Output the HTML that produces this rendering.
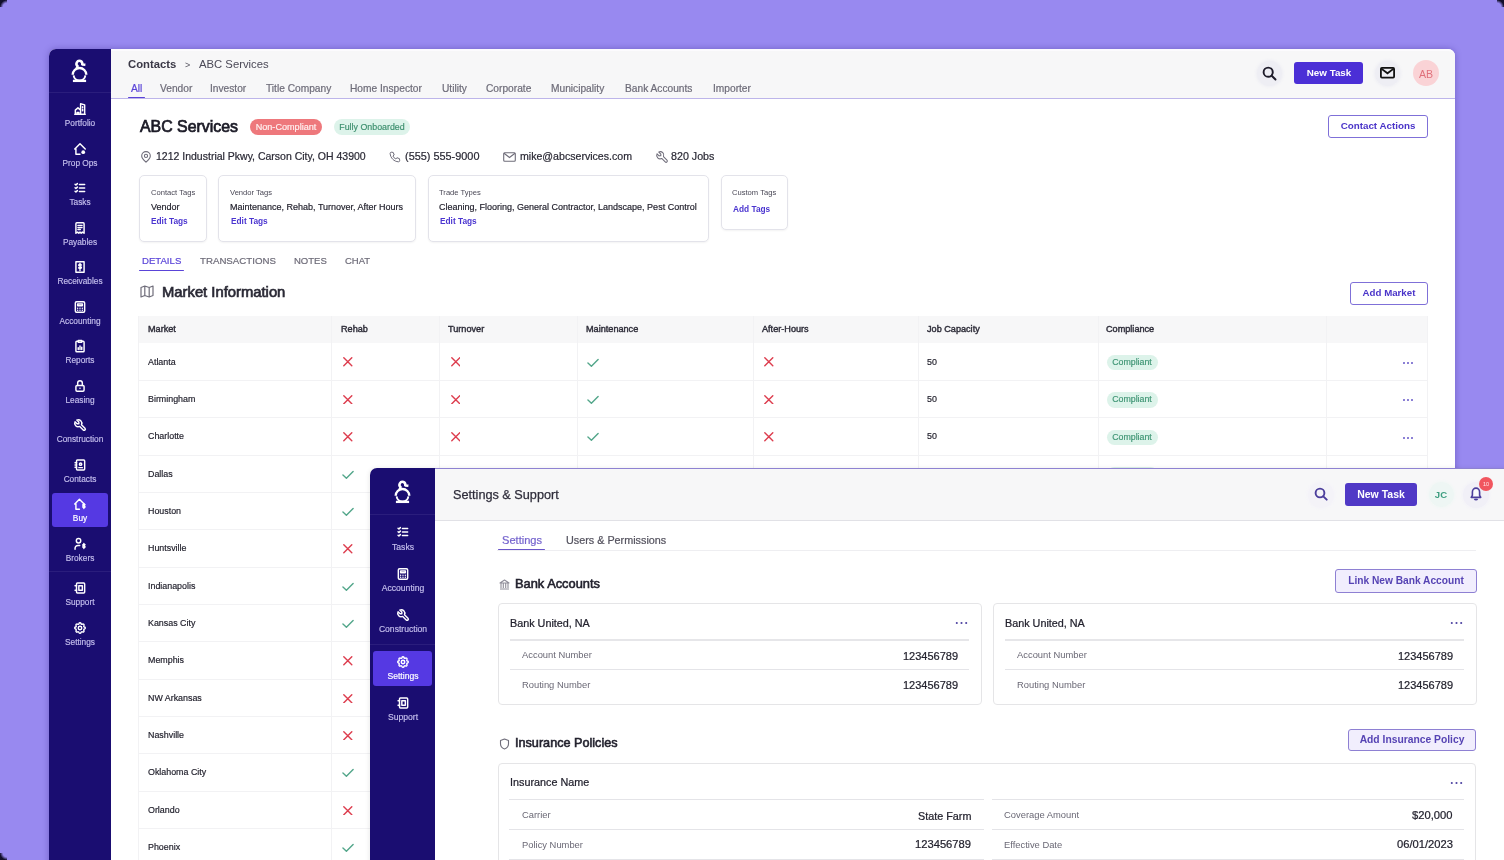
<!DOCTYPE html>
<html><head><meta charset="utf-8">
<style>
*{box-sizing:border-box;margin:0;padding:0}
html,body{width:1504px;height:860px;overflow:hidden}
body{background:#9889F0;font-family:"Liberation Sans",sans-serif;position:relative;color:#1f1d2e}
.abs{position:absolute}
.t{position:absolute;white-space:nowrap;line-height:1;will-change:transform}
</style></head><body>
<div class="abs" style="left:0;top:0;width:7px;height:7px;background:radial-gradient(circle at 100% 100%, rgba(10,8,32,0) 4px, rgba(10,8,32,0.95) 7px)"></div><div class="abs" style="left:1497px;top:0;width:7px;height:7px;background:radial-gradient(circle at 0% 100%, rgba(10,8,32,0) 4px, rgba(10,8,32,0.95) 7px)"></div><div class="abs" style="left:0;top:853px;width:7px;height:7px;background:radial-gradient(circle at 100% 0%, rgba(10,8,32,0) 4px, rgba(10,8,32,0.95) 7px)"></div><div class="abs" style="left:49.00px;top:48.80px;width:1406.30px;height:851.20px;background:#fff;border-radius:7px 7px 0 0;box-shadow:0 0 6px rgba(40,20,120,0.35)"></div><div class="abs" style="left:49.00px;top:48.80px;width:62.00px;height:851.20px;background:#1A0D71;border-radius:7px 0 0 0"></div><div class="abs" style="left:111.00px;top:48.80px;width:1344.30px;height:50.20px;background:#F7F7F8;border-radius:0 7px 0 0;border-top:2px solid #FCFBFE;border-bottom:1px solid #BDB5EA"></div><svg class="abs" style="left:67.15px;top:56.00px;" width="25.0" height="29.0" viewBox="0 0 25 29" fill="none"><g stroke="#fff" stroke-linecap="butt" fill="none"><path d="M9.6 12.6 L10.6 10.0 A2.9 2.9 0 1 1 15.2 8.4 L18.4 8.7" stroke-width="2.5" stroke-linejoin="round"/><path d="M5.7 18.8 A6.8 6.8 0 1 1 19.3 18.8" stroke-width="2.4"/><path d="M6.6 19.3 A5.95 5.95 0 0 0 18.4 19.3" stroke-width="1.9"/><path d="M5.9 24.9 H19.1" stroke-width="2.3"/></g></svg><div class="abs" style="left:49.00px;top:92.00px;width:62.00px;height:1.00px;background:#2A1D7C"></div><div class="abs" style="left:51.50px;top:493.00px;width:56.00px;height:33.50px;background:#5539E3;border-radius:3px"></div><div class="abs" style="left:49.00px;top:571.00px;width:62.00px;height:1.00px;background:#2A1D7C"></div><svg class="abs" style="left:72.50px;top:102.00px;" width="14" height="14" viewBox="0 0 24 24" fill="none"><path stroke="#fff" stroke-width="2.5" stroke-linecap="round" stroke-linejoin="round" fill="none" d="M3 21h18M4 21v-7l4.5-4 4.5 4v7M13 21V3l7 2v16M16.5 8v2M16.5 13v2M7 21v-3h3v3"/></svg><div class="t" style="left:-120.20px;width:400px;text-align:center;top:119.22px;font-size:8.3px;-webkit-text-stroke:0.17px currentColor;color:#C3BDEC;">Portfolio</div><svg class="abs" style="left:72.50px;top:141.60px;" width="14" height="14" viewBox="0 0 24 24" fill="none"><path stroke="#fff" stroke-width="2.5" stroke-linecap="round" stroke-linejoin="round" fill="none" d="M3 12l9-9 9 9M5 10v11h7"/><circle cx="17.5" cy="17.5" r="3.2" fill="#fff"/></svg><div class="t" style="left:-120.20px;width:400px;text-align:center;top:158.82px;font-size:8.3px;-webkit-text-stroke:0.17px currentColor;color:#C3BDEC;">Prop Ops</div><svg class="abs" style="left:72.50px;top:181.10px;" width="14" height="14" viewBox="0 0 24 24" fill="none"><path stroke="#fff" stroke-width="2.5" stroke-linecap="round" stroke-linejoin="round" fill="none" d="M3.5 5.5l1.5 1.5 2.5-2.5M3.5 11.5l1.5 1.5 2.5-2.5M3.5 17.5l1.5 1.5 2.5-2.5M11 6h9M11 12h9M11 18h9"/></svg><div class="t" style="left:-120.20px;width:400px;text-align:center;top:198.32px;font-size:8.3px;-webkit-text-stroke:0.17px currentColor;color:#C3BDEC;">Tasks</div><svg class="abs" style="left:72.50px;top:220.60px;" width="14" height="14" viewBox="0 0 24 24" fill="none"><path stroke="#fff" stroke-width="2.5" stroke-linecap="round" stroke-linejoin="round" fill="none" d="M5 21V4.5A1.5 1.5 0 016.5 3h11A1.5 1.5 0 0119 4.5V21l-3-2-2 2-2-2-2 2-2-2-3 2zM8.5 7.5h7M8.5 11h7M8.5 14.5h4"/></svg><div class="t" style="left:-120.20px;width:400px;text-align:center;top:237.82px;font-size:8.3px;-webkit-text-stroke:0.17px currentColor;color:#C3BDEC;">Payables</div><svg class="abs" style="left:72.50px;top:260.10px;" width="14" height="14" viewBox="0 0 24 24" fill="none"><path stroke="#fff" stroke-width="2.5" stroke-linecap="round" stroke-linejoin="round" fill="none" d="M5 3h14v18H5zM14.3 8.6c-.5-.8-1.3-1.2-2.3-1.2-1.3 0-2.2.7-2.2 1.7 0 2.4 4.6 1.3 4.6 3.7 0 1-.9 1.7-2.3 1.7-1 0-1.9-.5-2.4-1.2M12 6v12"/></svg><div class="t" style="left:-120.20px;width:400px;text-align:center;top:277.32px;font-size:8.3px;-webkit-text-stroke:0.17px currentColor;color:#C3BDEC;">Receivables</div><svg class="abs" style="left:72.50px;top:299.60px;" width="14" height="14" viewBox="0 0 24 24" fill="none"><rect x="4" y="3" width="16" height="18" rx="2" stroke="#fff" stroke-width="2.5" stroke-linecap="round" stroke-linejoin="round" fill="none"/><path stroke="#fff" stroke-width="2.5" stroke-linecap="round" stroke-linejoin="round" fill="none" d="M8 7h8v3H8zM8 14v.01M12 14v.01M16 14v.01M8 17.5v.01M12 17.5v.01M16 17.5v.01"/></svg><div class="t" style="left:-120.20px;width:400px;text-align:center;top:316.82px;font-size:8.3px;-webkit-text-stroke:0.17px currentColor;color:#C3BDEC;">Accounting</div><svg class="abs" style="left:72.50px;top:339.10px;" width="14" height="14" viewBox="0 0 24 24" fill="none"><path stroke="#fff" stroke-width="2.5" stroke-linecap="round" stroke-linejoin="round" fill="none" d="M9 4H6.5A1.5 1.5 0 005 5.5v15A1.5 1.5 0 006.5 22h11a1.5 1.5 0 001.5-1.5v-15A1.5 1.5 0 0017.5 4H15M9 2.5h6v3H9zM9 18v-3M12 18v-6M15 18v-4"/></svg><div class="t" style="left:-120.20px;width:400px;text-align:center;top:356.32px;font-size:8.3px;-webkit-text-stroke:0.17px currentColor;color:#C3BDEC;">Reports</div><svg class="abs" style="left:72.50px;top:378.60px;" width="14" height="14" viewBox="0 0 24 24" fill="none"><rect x="5" y="11" width="14" height="10" rx="2" stroke="#fff" stroke-width="2.5" stroke-linecap="round" stroke-linejoin="round" fill="none"/><circle cx="12" cy="16" r="1.3" fill="#fff"/><path stroke="#fff" stroke-width="2.5" stroke-linecap="round" stroke-linejoin="round" fill="none" d="M8 11V7a4 4 0 118 0v4"/></svg><div class="t" style="left:-120.20px;width:400px;text-align:center;top:395.82px;font-size:8.3px;-webkit-text-stroke:0.17px currentColor;color:#C3BDEC;">Leasing</div><svg class="abs" style="left:72.50px;top:418.10px;" width="14" height="14" viewBox="0 0 24 24" fill="none"><path stroke="#fff" stroke-width="2.5" stroke-linecap="round" stroke-linejoin="round" fill="none" d="M7 10h3V7L6.5 3.5a6 6 0 018 8l6 6a2 2 0 01-3 3l-6-6a6 6 0 01-8-8L7 10"/></svg><div class="t" style="left:-120.20px;width:400px;text-align:center;top:435.32px;font-size:8.3px;-webkit-text-stroke:0.17px currentColor;color:#C3BDEC;">Construction</div><svg class="abs" style="left:72.50px;top:457.60px;" width="14" height="14" viewBox="0 0 24 24" fill="none"><path stroke="#fff" stroke-width="2.5" stroke-linecap="round" stroke-linejoin="round" fill="none" d="M20 5v14a1.5 1.5 0 01-1.5 1.5h-11A1.5 1.5 0 016 19V5a1.5 1.5 0 011.5-1.5h11A1.5 1.5 0 0120 5zM10 16.5h6M3.5 8h3M3.5 12h3M3.5 16h3"/><circle cx="13" cy="10.5" r="2" stroke="#fff" stroke-width="2.5" stroke-linecap="round" stroke-linejoin="round" fill="none"/></svg><div class="t" style="left:-120.20px;width:400px;text-align:center;top:474.82px;font-size:8.3px;-webkit-text-stroke:0.17px currentColor;color:#C3BDEC;">Contacts</div><svg class="abs" style="left:72.50px;top:497.10px;" width="14" height="14" viewBox="0 0 24 24" fill="none"><path stroke="#fff" stroke-width="2.5" stroke-linecap="round" stroke-linejoin="round" fill="none" d="M3 12l8-8 8 8M5 10v11h6"/><path stroke="#fff" stroke-width="2.5" stroke-linecap="round" stroke-linejoin="round" fill="none" d="M20.5 13.2c-.4-.7-1.1-1-1.9-1-1.1 0-1.8.6-1.8 1.4 0 1.9 3.8 1 3.8 3 0 .8-.8 1.4-1.9 1.4-.8 0-1.6-.4-2-1M18.6 11v8.6"/></svg><div class="t" style="left:-120.20px;width:400px;text-align:center;top:514.32px;font-size:8.3px;-webkit-text-stroke:0.17px currentColor;color:#fff;">Buy</div><svg class="abs" style="left:72.50px;top:536.60px;" width="14" height="14" viewBox="0 0 24 24" fill="none"><circle cx="9.5" cy="6.5" r="3.8" stroke="#fff" stroke-width="2.5" stroke-linecap="round" stroke-linejoin="round" fill="none"/><path stroke="#fff" stroke-width="2.5" stroke-linecap="round" stroke-linejoin="round" fill="none" d="M3.5 21v-1.5a5 5 0 015-5h3"/><path stroke="#fff" stroke-width="2.5" stroke-linecap="round" stroke-linejoin="round" fill="none" d="M20.5 13.2c-.4-.7-1.1-1-1.9-1-1.1 0-1.8.6-1.8 1.4 0 1.9 3.8 1 3.8 3 0 .8-.8 1.4-1.9 1.4-.8 0-1.6-.4-2-1M18.6 11v8.6"/></svg><div class="t" style="left:-120.20px;width:400px;text-align:center;top:553.82px;font-size:8.3px;-webkit-text-stroke:0.17px currentColor;color:#C3BDEC;">Brokers</div><svg class="abs" style="left:72.50px;top:581.00px;" width="14" height="14" viewBox="0 0 24 24" fill="none"><path stroke="#fff" stroke-width="2.5" stroke-linecap="round" stroke-linejoin="round" fill="none" d="M20 5v14a1.5 1.5 0 01-1.5 1.5h-11A1.5 1.5 0 016 19V5a1.5 1.5 0 011.5-1.5h11A1.5 1.5 0 0120 5zM3.5 8h3M3.5 16h3M10 8h6v8h-6z"/></svg><div class="t" style="left:-120.20px;width:400px;text-align:center;top:598.22px;font-size:8.3px;-webkit-text-stroke:0.17px currentColor;color:#C3BDEC;">Support</div><svg class="abs" style="left:72.50px;top:620.50px;" width="14" height="14" viewBox="0 0 24 24" fill="none"><path stroke="#fff" stroke-width="2.5" stroke-linecap="round" stroke-linejoin="round" fill="none" d="M10.3 4.3c.4-1.8 2.9-1.8 3.4 0a1.7 1.7 0 002.6 1.1c1.5-.9 3.3.8 2.4 2.4a1.7 1.7 0 001 2.6c1.8.4 1.8 2.9 0 3.4a1.7 1.7 0 00-1 2.6c.9 1.5-.8 3.3-2.4 2.4a1.7 1.7 0 00-2.6 1c-.4 1.8-2.9 1.8-3.4 0a1.7 1.7 0 00-2.6-1c-1.5.9-3.3-.8-2.4-2.4a1.7 1.7 0 00-1-2.6c-1.8-.4-1.8-2.9 0-3.4a1.7 1.7 0 001-2.6c-.9-1.5.8-3.3 2.4-2.4 1 .6 2.3.1 2.6-1.1z"/><circle cx="12" cy="12" r="3" stroke="#fff" stroke-width="2.5" stroke-linecap="round" stroke-linejoin="round" fill="none"/></svg><div class="t" style="left:-120.20px;width:400px;text-align:center;top:637.72px;font-size:8.3px;-webkit-text-stroke:0.17px currentColor;color:#C3BDEC;">Settings</div><div class="t" style="left:128.00px;top:58.97px;font-size:11.3px;font-weight:bold;color:#3a3846;">Contacts</div><div class="t" style="left:184.50px;top:61.14px;font-size:9px;color:#55535f;">&gt;</div><div class="t" style="left:198.50px;top:58.97px;font-size:11.3px;color:#4b4957;">ABC Services</div><div class="t" style="left:131.00px;top:83.90px;font-size:10.2px;-webkit-text-stroke:0.20px currentColor;color:#5A44D8;">All</div><div class="t" style="left:160.00px;top:83.90px;font-size:10.2px;-webkit-text-stroke:0.20px currentColor;color:#6d6b78;">Vendor</div><div class="t" style="left:210.00px;top:83.90px;font-size:10.2px;-webkit-text-stroke:0.20px currentColor;color:#6d6b78;">Investor</div><div class="t" style="left:265.70px;top:83.90px;font-size:10.2px;-webkit-text-stroke:0.20px currentColor;color:#6d6b78;">Title Company</div><div class="t" style="left:350.40px;top:83.90px;font-size:10.2px;-webkit-text-stroke:0.20px currentColor;color:#6d6b78;">Home Inspector</div><div class="t" style="left:442.00px;top:83.90px;font-size:10.2px;-webkit-text-stroke:0.20px currentColor;color:#6d6b78;">Utility</div><div class="t" style="left:486.40px;top:83.90px;font-size:10.2px;-webkit-text-stroke:0.20px currentColor;color:#6d6b78;">Corporate</div><div class="t" style="left:550.60px;top:83.90px;font-size:10.2px;-webkit-text-stroke:0.20px currentColor;color:#6d6b78;">Municipality</div><div class="t" style="left:625.20px;top:83.90px;font-size:10.2px;-webkit-text-stroke:0.20px currentColor;color:#6d6b78;">Bank Accounts</div><div class="t" style="left:712.90px;top:83.90px;font-size:10.2px;-webkit-text-stroke:0.20px currentColor;color:#6d6b78;">Importer</div><div class="abs" style="left:128.00px;top:96.60px;width:17.00px;height:1.90px;background:#5A44D8;border-radius:1px"></div><div class="abs" style="left:1257.00px;top:60.50px;width:25.00px;height:25.00px;background:#EEEEF4;border-radius:50%;box-shadow:0 0 3px 1px #EEEEF4"></div><svg class="abs" style="left:1262.00px;top:66.00px;" width="15" height="15" viewBox="0 0 15 15" fill="none"><circle cx="6.2" cy="6.2" r="4.6" stroke="#1d1b29" stroke-width="1.9"/><path d="M9.7 9.7l3.8 3.8" stroke="#1d1b29" stroke-width="2" stroke-linecap="round"/></svg><div class="abs" style="left:1294.00px;top:62.00px;width:69.00px;height:21.50px;background:#4B2FD6;border-radius:3px"></div><div class="t" style="left:1128.50px;width:400px;text-align:center;top:67.85px;font-size:9.8px;font-weight:bold;color:#fff;">New Task</div><div class="abs" style="left:1375.00px;top:60.50px;width:25.00px;height:25.00px;background:#EEEEF4;border-radius:50%;box-shadow:0 0 3px 1px #EEEEF4"></div><svg class="abs" style="left:1380.20px;top:67.30px;" width="15" height="11.5" viewBox="0 0 15 11.5" fill="none"><rect x="0.9" y="0.9" width="13.2" height="9.7" rx="1" stroke="#111" stroke-width="1.8"/><path d="M1.3 1.6L7.5 6.3l6.2-4.7" stroke="#111" stroke-width="1.8"/></svg><div class="abs" style="left:1412.50px;top:59.50px;width:26.50px;height:26.50px;background:#FAD3D6;border-radius:50%"></div><div class="t" style="left:1225.80px;width:400px;text-align:center;top:68.55px;font-size:10.6px;color:#E0707B;">AB</div><div class="t" style="left:139.60px;top:119.13px;font-size:15.9px;-webkit-text-stroke:0.72px currentColor;color:#1b1a26;">ABC Services</div><div class="abs" style="left:249.70px;top:118.60px;width:72.20px;height:16.40px;background:#EE787C;border-radius:9px"></div><div class="t" style="left:85.80px;width:400px;text-align:center;top:123.03px;font-size:9.1px;-webkit-text-stroke:0.18px currentColor;color:#FFF0F0;">Non-Compliant</div><div class="abs" style="left:334.00px;top:118.60px;width:76.00px;height:16.40px;background:#DDF3EA;border-radius:9px"></div><div class="t" style="left:172.30px;width:400px;text-align:center;top:123.06px;font-size:8.85px;-webkit-text-stroke:0.18px currentColor;color:#3D8F6E;">Fully Onboarded</div><div class="abs" style="left:1328.30px;top:115.20px;width:99.40px;height:22.60px;background:#fff;border:1px solid #7F70D8;border-radius:3px"></div><div class="t" style="left:1178.00px;width:400px;text-align:center;top:121.45px;font-size:9.8px;font-weight:bold;color:#4A34C9;">Contact Actions</div><svg class="abs" style="left:140.00px;top:151.00px;" width="12" height="12" viewBox="0 0 12 12" fill="none"><path d="M6 11.2c-2.6-2.4-4.3-4.3-4.3-6.3a4.3 4.3 0 018.6 0c0 2-1.7 3.9-4.3 6.3z" stroke="#6f6d7a" stroke-width="1.1"/><circle cx="6" cy="4.9" r="1.6" stroke="#6f6d7a" stroke-width="1.1"/></svg><div class="t" style="left:156.00px;top:151.27px;font-size:10.5px;-webkit-text-stroke:0.21px currentColor;color:#2a2935;">1212 Industrial Pkwy, Carson City, OH 43900</div><svg class="abs" style="left:389.00px;top:151.00px;" width="12" height="12" viewBox="0 0 12 12" fill="none"><path d="M2.2 1.2l2 .2 1 2.6-1.3 1c.6 1.4 1.6 2.4 3 3l1-1.3 2.6 1 .2 2c0 .6-.5 1.1-1.1 1.1C5 10.6 1.4 7 1.1 2.3c0-.6.5-1.1 1.1-1.1z" stroke="#6f6d7a" stroke-width="1"/></svg><div class="t" style="left:404.90px;top:151.22px;font-size:10.9px;-webkit-text-stroke:0.22px currentColor;color:#2a2935;">(555) 555-9000</div><svg class="abs" style="left:503.00px;top:151.50px;" width="13" height="10" viewBox="0 0 13 10" fill="none"><rect x=".7" y=".7" width="11.6" height="8.6" rx="1" stroke="#6f6d7a" stroke-width="1.1"/><path d="M1 1.2l5.5 4.3L12 1.2" stroke="#6f6d7a" stroke-width="1.1"/></svg><div class="t" style="left:519.60px;top:151.25px;font-size:10.6px;-webkit-text-stroke:0.21px currentColor;color:#2a2935;">mike@abcservices.com</div><svg class="abs" style="left:654.50px;top:150.00px;" width="14" height="14" viewBox="0 0 24 24" fill="none"><path stroke="#6f6d7a" stroke-width="1.8" stroke-linecap="round" stroke-linejoin="round" fill="none" d="M7 10h3V7L6.5 3.5a6 6 0 018 8l6 6a2 2 0 01-3 3l-6-6a6 6 0 01-8-8L7 10"/></svg><div class="t" style="left:671.40px;top:151.24px;font-size:10.7px;-webkit-text-stroke:0.21px currentColor;color:#2a2935;">820 Jobs</div><div class="abs" style="left:139.00px;top:175.00px;width:68.00px;height:67.00px;background:#fff;border:1px solid #E3E3EA;border-radius:5px;box-shadow:0 1px 2px rgba(0,0,0,0.05)"></div><div class="abs" style="left:218.40px;top:175.00px;width:197.30px;height:67.00px;background:#fff;border:1px solid #E3E3EA;border-radius:5px;box-shadow:0 1px 2px rgba(0,0,0,0.05)"></div><div class="abs" style="left:427.60px;top:175.00px;width:281.40px;height:67.00px;background:#fff;border:1px solid #E3E3EA;border-radius:5px;box-shadow:0 1px 2px rgba(0,0,0,0.05)"></div><div class="abs" style="left:720.90px;top:175.00px;width:67.10px;height:54.50px;background:#fff;border:1px solid #E3E3EA;border-radius:5px;box-shadow:0 1px 2px rgba(0,0,0,0.05)"></div><div class="t" style="left:151.00px;top:188.91px;font-size:7.6px;color:#4a4856;">Contact Tags</div><div class="t" style="left:151.00px;top:202.64px;font-size:9.0px;-webkit-text-stroke:0.18px currentColor;color:#23222e;">Vendor</div><div class="t" style="left:151.30px;top:217.32px;font-size:8.3px;font-weight:bold;color:#4B35D0;">Edit Tags</div><div class="t" style="left:230.30px;top:188.91px;font-size:7.6px;color:#4a4856;">Vendor Tags</div><div class="t" style="left:230.30px;top:202.64px;font-size:9.0px;-webkit-text-stroke:0.18px currentColor;color:#23222e;">Maintenance, Rehab, Turnover, After Hours</div><div class="t" style="left:230.60px;top:217.32px;font-size:8.3px;font-weight:bold;color:#4B35D0;">Edit Tags</div><div class="t" style="left:439.40px;top:188.91px;font-size:7.6px;color:#4a4856;">Trade Types</div><div class="t" style="left:439.40px;top:202.64px;font-size:9.0px;-webkit-text-stroke:0.18px currentColor;color:#23222e;">Cleaning, Flooring, General Contractor, Landscape, Pest Control</div><div class="t" style="left:439.70px;top:217.32px;font-size:8.3px;font-weight:bold;color:#4B35D0;">Edit Tags</div><div class="t" style="left:732.40px;top:188.91px;font-size:7.6px;color:#4a4856;">Custom Tags</div><div class="t" style="left:733.20px;top:205.02px;font-size:8.3px;font-weight:bold;color:#4B35D0;">Add Tags</div><div class="t" style="left:142.20px;top:256.47px;font-size:9.6px;-webkit-text-stroke:0.19px currentColor;color:#5A44D8;">DETAILS</div><div class="t" style="left:199.70px;top:256.46px;font-size:9.7px;-webkit-text-stroke:0.19px currentColor;color:#6d6b78;">TRANSACTIONS</div><div class="t" style="left:293.70px;top:256.48px;font-size:9.5px;-webkit-text-stroke:0.19px currentColor;color:#6d6b78;">NOTES</div><div class="t" style="left:344.50px;top:256.48px;font-size:9.5px;-webkit-text-stroke:0.19px currentColor;color:#6d6b78;">CHAT</div><div class="abs" style="left:138.60px;top:269.50px;width:45.60px;height:1.80px;background:#5A44D8;border-radius:1px"></div><svg class="abs" style="left:140.00px;top:284.50px;" width="14" height="13" viewBox="0 0 14 13" fill="none"><path d="M1 2.5l3.8-1.5 4.4 1.5L13 1v9.5l-3.8 1.5-4.4-1.5L1 12z M4.8 1v9.5 M9.2 2.5V12" stroke="#6f6d7a" stroke-width="1.2" stroke-linejoin="round"/></svg><div class="t" style="left:162.00px;top:284.96px;font-size:14.8px;-webkit-text-stroke:0.67px currentColor;color:#2a2935;">Market Information</div><div class="abs" style="left:1350.40px;top:282.20px;width:77.30px;height:22.60px;background:#fff;border:1px solid #7F70D8;border-radius:3px"></div><div class="t" style="left:1189.00px;width:400px;text-align:center;top:288.46px;font-size:9.7px;font-weight:bold;color:#4A34C9;">Add Market</div><div class="abs" style="left:139.00px;top:316.30px;width:1289.00px;height:27.20px;background:#F7F7F8"></div><div class="t" style="left:147.80px;top:324.92px;font-size:9.15px;-webkit-text-stroke:0.41px currentColor;color:#2e2d39;">Market</div><div class="t" style="left:340.60px;top:324.92px;font-size:9.15px;-webkit-text-stroke:0.41px currentColor;color:#2e2d39;">Rehab</div><div class="t" style="left:448.10px;top:324.92px;font-size:9.15px;-webkit-text-stroke:0.41px currentColor;color:#2e2d39;">Turnover</div><div class="t" style="left:585.70px;top:324.92px;font-size:9.15px;-webkit-text-stroke:0.41px currentColor;color:#2e2d39;">Maintenance</div><div class="t" style="left:761.50px;top:324.92px;font-size:9.15px;-webkit-text-stroke:0.41px currentColor;color:#2e2d39;">After-Hours</div><div class="t" style="left:926.80px;top:324.92px;font-size:9.15px;-webkit-text-stroke:0.41px currentColor;color:#2e2d39;">Job Capacity</div><div class="t" style="left:1106.30px;top:324.92px;font-size:9.15px;-webkit-text-stroke:0.41px currentColor;color:#2e2d39;">Compliance</div><div class="abs" style="left:331.30px;top:316.30px;width:1.00px;height:543.70px;background:#F2F2F4"></div><div class="abs" style="left:439.30px;top:316.30px;width:1.00px;height:543.70px;background:#F2F2F4"></div><div class="abs" style="left:576.90px;top:316.30px;width:1.00px;height:543.70px;background:#F2F2F4"></div><div class="abs" style="left:752.70px;top:316.30px;width:1.00px;height:543.70px;background:#F2F2F4"></div><div class="abs" style="left:918.00px;top:316.30px;width:1.00px;height:543.70px;background:#F2F2F4"></div><div class="abs" style="left:1097.50px;top:316.30px;width:1.00px;height:543.70px;background:#F2F2F4"></div><div class="abs" style="left:1326.20px;top:316.30px;width:1.00px;height:543.70px;background:#F2F2F4"></div><div class="abs" style="left:138.40px;top:316.30px;width:1.00px;height:543.70px;background:#F2F2F4"></div><div class="abs" style="left:1427.00px;top:316.30px;width:1.00px;height:543.70px;background:#F2F2F4"></div><div class="abs" style="left:139.00px;top:379.85px;width:1289.00px;height:1.00px;background:#F2F2F4"></div><div class="t" style="left:147.80px;top:357.55px;font-size:8.9px;-webkit-text-stroke:0.18px currentColor;color:#1e1d29;">Atlanta</div><svg class="abs" style="left:343.10px;top:357.40px;" width="9.6" height="9.6" viewBox="0 0 9.6 9.6" fill="none"><path d="M0.8 0.8L8.8 8.8M8.8 0.8L0.8 8.8" stroke="#DD3D4E" stroke-width="1.4" stroke-linecap="round"/></svg><svg class="abs" style="left:450.60px;top:357.40px;" width="9.6" height="9.6" viewBox="0 0 9.6 9.6" fill="none"><path d="M0.8 0.8L8.8 8.8M8.8 0.8L0.8 8.8" stroke="#DD3D4E" stroke-width="1.4" stroke-linecap="round"/></svg><svg class="abs" style="left:587.20px;top:357.50px;" width="12" height="10" viewBox="0 0 12 10" fill="none"><path d="M0.95 5L4.4 8.2L11.1 1.5" stroke="#52A68A" stroke-width="1.4" stroke-linecap="round" stroke-linejoin="round"/></svg><svg class="abs" style="left:764.00px;top:357.40px;" width="9.6" height="9.6" viewBox="0 0 9.6 9.6" fill="none"><path d="M0.8 0.8L8.8 8.8M8.8 0.8L0.8 8.8" stroke="#DD3D4E" stroke-width="1.4" stroke-linecap="round"/></svg><div class="t" style="left:926.80px;top:357.55px;font-size:8.9px;-webkit-text-stroke:0.18px currentColor;color:#23222e;">50</div><div class="abs" style="left:1106.50px;top:355.00px;width:51.30px;height:15.30px;background:#DDF3EA;border-radius:8px"></div><div class="t" style="left:932.10px;width:400px;text-align:center;top:358.07px;font-size:8.8px;-webkit-text-stroke:0.18px currentColor;color:#3F9574;">Compliant</div><svg class="abs" style="left:1401.50px;top:361.00px;" width="12" height="4" viewBox="0 0 12 4" fill="none"><circle cx="2" cy="2" r="0.95" fill="#5B4BC4"/><circle cx="6" cy="2" r="0.95" fill="#5B4BC4"/><circle cx="10" cy="2" r="0.95" fill="#5B4BC4"/></svg><div class="abs" style="left:139.00px;top:417.20px;width:1289.00px;height:1.00px;background:#F2F2F4"></div><div class="t" style="left:147.80px;top:394.90px;font-size:8.9px;-webkit-text-stroke:0.18px currentColor;color:#1e1d29;">Birmingham</div><svg class="abs" style="left:343.10px;top:394.75px;" width="9.6" height="9.6" viewBox="0 0 9.6 9.6" fill="none"><path d="M0.8 0.8L8.8 8.8M8.8 0.8L0.8 8.8" stroke="#DD3D4E" stroke-width="1.4" stroke-linecap="round"/></svg><svg class="abs" style="left:450.60px;top:394.75px;" width="9.6" height="9.6" viewBox="0 0 9.6 9.6" fill="none"><path d="M0.8 0.8L8.8 8.8M8.8 0.8L0.8 8.8" stroke="#DD3D4E" stroke-width="1.4" stroke-linecap="round"/></svg><svg class="abs" style="left:587.20px;top:394.85px;" width="12" height="10" viewBox="0 0 12 10" fill="none"><path d="M0.95 5L4.4 8.2L11.1 1.5" stroke="#52A68A" stroke-width="1.4" stroke-linecap="round" stroke-linejoin="round"/></svg><svg class="abs" style="left:764.00px;top:394.75px;" width="9.6" height="9.6" viewBox="0 0 9.6 9.6" fill="none"><path d="M0.8 0.8L8.8 8.8M8.8 0.8L0.8 8.8" stroke="#DD3D4E" stroke-width="1.4" stroke-linecap="round"/></svg><div class="t" style="left:926.80px;top:394.90px;font-size:8.9px;-webkit-text-stroke:0.18px currentColor;color:#23222e;">50</div><div class="abs" style="left:1106.50px;top:392.35px;width:51.30px;height:15.30px;background:#DDF3EA;border-radius:8px"></div><div class="t" style="left:932.10px;width:400px;text-align:center;top:395.42px;font-size:8.8px;-webkit-text-stroke:0.18px currentColor;color:#3F9574;">Compliant</div><svg class="abs" style="left:1401.50px;top:398.35px;" width="12" height="4" viewBox="0 0 12 4" fill="none"><circle cx="2" cy="2" r="0.95" fill="#5B4BC4"/><circle cx="6" cy="2" r="0.95" fill="#5B4BC4"/><circle cx="10" cy="2" r="0.95" fill="#5B4BC4"/></svg><div class="abs" style="left:139.00px;top:454.55px;width:1289.00px;height:1.00px;background:#F2F2F4"></div><div class="t" style="left:147.80px;top:432.25px;font-size:8.9px;-webkit-text-stroke:0.18px currentColor;color:#1e1d29;">Charlotte</div><svg class="abs" style="left:343.10px;top:432.10px;" width="9.6" height="9.6" viewBox="0 0 9.6 9.6" fill="none"><path d="M0.8 0.8L8.8 8.8M8.8 0.8L0.8 8.8" stroke="#DD3D4E" stroke-width="1.4" stroke-linecap="round"/></svg><svg class="abs" style="left:450.60px;top:432.10px;" width="9.6" height="9.6" viewBox="0 0 9.6 9.6" fill="none"><path d="M0.8 0.8L8.8 8.8M8.8 0.8L0.8 8.8" stroke="#DD3D4E" stroke-width="1.4" stroke-linecap="round"/></svg><svg class="abs" style="left:587.20px;top:432.20px;" width="12" height="10" viewBox="0 0 12 10" fill="none"><path d="M0.95 5L4.4 8.2L11.1 1.5" stroke="#52A68A" stroke-width="1.4" stroke-linecap="round" stroke-linejoin="round"/></svg><svg class="abs" style="left:764.00px;top:432.10px;" width="9.6" height="9.6" viewBox="0 0 9.6 9.6" fill="none"><path d="M0.8 0.8L8.8 8.8M8.8 0.8L0.8 8.8" stroke="#DD3D4E" stroke-width="1.4" stroke-linecap="round"/></svg><div class="t" style="left:926.80px;top:432.25px;font-size:8.9px;-webkit-text-stroke:0.18px currentColor;color:#23222e;">50</div><div class="abs" style="left:1106.50px;top:429.70px;width:51.30px;height:15.30px;background:#DDF3EA;border-radius:8px"></div><div class="t" style="left:932.10px;width:400px;text-align:center;top:432.77px;font-size:8.8px;-webkit-text-stroke:0.18px currentColor;color:#3F9574;">Compliant</div><svg class="abs" style="left:1401.50px;top:435.70px;" width="12" height="4" viewBox="0 0 12 4" fill="none"><circle cx="2" cy="2" r="0.95" fill="#5B4BC4"/><circle cx="6" cy="2" r="0.95" fill="#5B4BC4"/><circle cx="10" cy="2" r="0.95" fill="#5B4BC4"/></svg><div class="abs" style="left:139.00px;top:491.90px;width:1289.00px;height:1.00px;background:#F2F2F4"></div><div class="t" style="left:147.80px;top:469.60px;font-size:8.9px;-webkit-text-stroke:0.18px currentColor;color:#1e1d29;">Dallas</div><svg class="abs" style="left:342.10px;top:469.55px;" width="12" height="10" viewBox="0 0 12 10" fill="none"><path d="M0.95 5L4.4 8.2L11.1 1.5" stroke="#52A68A" stroke-width="1.4" stroke-linecap="round" stroke-linejoin="round"/></svg><svg class="abs" style="left:450.60px;top:469.45px;" width="9.6" height="9.6" viewBox="0 0 9.6 9.6" fill="none"><path d="M0.8 0.8L8.8 8.8M8.8 0.8L0.8 8.8" stroke="#DD3D4E" stroke-width="1.4" stroke-linecap="round"/></svg><svg class="abs" style="left:587.20px;top:469.55px;" width="12" height="10" viewBox="0 0 12 10" fill="none"><path d="M0.95 5L4.4 8.2L11.1 1.5" stroke="#52A68A" stroke-width="1.4" stroke-linecap="round" stroke-linejoin="round"/></svg><svg class="abs" style="left:764.00px;top:469.45px;" width="9.6" height="9.6" viewBox="0 0 9.6 9.6" fill="none"><path d="M0.8 0.8L8.8 8.8M8.8 0.8L0.8 8.8" stroke="#DD3D4E" stroke-width="1.4" stroke-linecap="round"/></svg><div class="t" style="left:926.80px;top:469.60px;font-size:8.9px;-webkit-text-stroke:0.18px currentColor;color:#23222e;">50</div><div class="abs" style="left:1106.50px;top:467.05px;width:51.30px;height:15.30px;background:#DDF3EA;border-radius:8px"></div><div class="t" style="left:932.10px;width:400px;text-align:center;top:470.12px;font-size:8.8px;-webkit-text-stroke:0.18px currentColor;color:#3F9574;">Compliant</div><svg class="abs" style="left:1401.50px;top:473.05px;" width="12" height="4" viewBox="0 0 12 4" fill="none"><circle cx="2" cy="2" r="0.95" fill="#5B4BC4"/><circle cx="6" cy="2" r="0.95" fill="#5B4BC4"/><circle cx="10" cy="2" r="0.95" fill="#5B4BC4"/></svg><div class="abs" style="left:139.00px;top:529.25px;width:1289.00px;height:1.00px;background:#F2F2F4"></div><div class="t" style="left:147.80px;top:506.95px;font-size:8.9px;-webkit-text-stroke:0.18px currentColor;color:#1e1d29;">Houston</div><svg class="abs" style="left:342.10px;top:506.90px;" width="12" height="10" viewBox="0 0 12 10" fill="none"><path d="M0.95 5L4.4 8.2L11.1 1.5" stroke="#52A68A" stroke-width="1.4" stroke-linecap="round" stroke-linejoin="round"/></svg><div class="abs" style="left:139.00px;top:566.60px;width:1289.00px;height:1.00px;background:#F2F2F4"></div><div class="t" style="left:147.80px;top:544.30px;font-size:8.9px;-webkit-text-stroke:0.18px currentColor;color:#1e1d29;">Huntsville</div><svg class="abs" style="left:343.10px;top:544.15px;" width="9.6" height="9.6" viewBox="0 0 9.6 9.6" fill="none"><path d="M0.8 0.8L8.8 8.8M8.8 0.8L0.8 8.8" stroke="#DD3D4E" stroke-width="1.4" stroke-linecap="round"/></svg><div class="abs" style="left:139.00px;top:603.95px;width:1289.00px;height:1.00px;background:#F2F2F4"></div><div class="t" style="left:147.80px;top:581.65px;font-size:8.9px;-webkit-text-stroke:0.18px currentColor;color:#1e1d29;">Indianapolis</div><svg class="abs" style="left:342.10px;top:581.60px;" width="12" height="10" viewBox="0 0 12 10" fill="none"><path d="M0.95 5L4.4 8.2L11.1 1.5" stroke="#52A68A" stroke-width="1.4" stroke-linecap="round" stroke-linejoin="round"/></svg><div class="abs" style="left:139.00px;top:641.30px;width:1289.00px;height:1.00px;background:#F2F2F4"></div><div class="t" style="left:147.80px;top:619.00px;font-size:8.9px;-webkit-text-stroke:0.18px currentColor;color:#1e1d29;">Kansas City</div><svg class="abs" style="left:342.10px;top:618.95px;" width="12" height="10" viewBox="0 0 12 10" fill="none"><path d="M0.95 5L4.4 8.2L11.1 1.5" stroke="#52A68A" stroke-width="1.4" stroke-linecap="round" stroke-linejoin="round"/></svg><div class="abs" style="left:139.00px;top:678.65px;width:1289.00px;height:1.00px;background:#F2F2F4"></div><div class="t" style="left:147.80px;top:656.35px;font-size:8.9px;-webkit-text-stroke:0.18px currentColor;color:#1e1d29;">Memphis</div><svg class="abs" style="left:343.10px;top:656.20px;" width="9.6" height="9.6" viewBox="0 0 9.6 9.6" fill="none"><path d="M0.8 0.8L8.8 8.8M8.8 0.8L0.8 8.8" stroke="#DD3D4E" stroke-width="1.4" stroke-linecap="round"/></svg><div class="abs" style="left:139.00px;top:716.00px;width:1289.00px;height:1.00px;background:#F2F2F4"></div><div class="t" style="left:147.80px;top:693.70px;font-size:8.9px;-webkit-text-stroke:0.18px currentColor;color:#1e1d29;">NW Arkansas</div><svg class="abs" style="left:343.10px;top:693.55px;" width="9.6" height="9.6" viewBox="0 0 9.6 9.6" fill="none"><path d="M0.8 0.8L8.8 8.8M8.8 0.8L0.8 8.8" stroke="#DD3D4E" stroke-width="1.4" stroke-linecap="round"/></svg><div class="abs" style="left:139.00px;top:753.35px;width:1289.00px;height:1.00px;background:#F2F2F4"></div><div class="t" style="left:147.80px;top:731.05px;font-size:8.9px;-webkit-text-stroke:0.18px currentColor;color:#1e1d29;">Nashville</div><svg class="abs" style="left:343.10px;top:730.90px;" width="9.6" height="9.6" viewBox="0 0 9.6 9.6" fill="none"><path d="M0.8 0.8L8.8 8.8M8.8 0.8L0.8 8.8" stroke="#DD3D4E" stroke-width="1.4" stroke-linecap="round"/></svg><div class="abs" style="left:139.00px;top:790.70px;width:1289.00px;height:1.00px;background:#F2F2F4"></div><div class="t" style="left:147.80px;top:768.40px;font-size:8.9px;-webkit-text-stroke:0.18px currentColor;color:#1e1d29;">Oklahoma City</div><svg class="abs" style="left:342.10px;top:768.35px;" width="12" height="10" viewBox="0 0 12 10" fill="none"><path d="M0.95 5L4.4 8.2L11.1 1.5" stroke="#52A68A" stroke-width="1.4" stroke-linecap="round" stroke-linejoin="round"/></svg><div class="abs" style="left:139.00px;top:828.05px;width:1289.00px;height:1.00px;background:#F2F2F4"></div><div class="t" style="left:147.80px;top:805.75px;font-size:8.9px;-webkit-text-stroke:0.18px currentColor;color:#1e1d29;">Orlando</div><svg class="abs" style="left:343.10px;top:805.60px;" width="9.6" height="9.6" viewBox="0 0 9.6 9.6" fill="none"><path d="M0.8 0.8L8.8 8.8M8.8 0.8L0.8 8.8" stroke="#DD3D4E" stroke-width="1.4" stroke-linecap="round"/></svg><div class="abs" style="left:139.00px;top:865.40px;width:1289.00px;height:1.00px;background:#F2F2F4"></div><div class="t" style="left:147.80px;top:843.10px;font-size:8.9px;-webkit-text-stroke:0.18px currentColor;color:#1e1d29;">Phoenix</div><svg class="abs" style="left:342.10px;top:843.05px;" width="12" height="10" viewBox="0 0 12 10" fill="none"><path d="M0.95 5L4.4 8.2L11.1 1.5" stroke="#52A68A" stroke-width="1.4" stroke-linecap="round" stroke-linejoin="round"/></svg><div class="abs" style="left:369.80px;top:468.00px;width:1170.20px;height:432.00px;background:#fff;border-radius:7px 0 0 0;box-shadow:-1px 0 4px rgba(0,0,0,0.08)"></div><div class="abs" style="left:369.80px;top:468.00px;width:65.20px;height:432.00px;background:#1A0D71;border-radius:7px 0 0 0"></div><div class="abs" style="left:435.00px;top:468.00px;width:1069.00px;height:53.00px;background:#F7F7F8;border-top:1px solid #8E82D2;border-bottom:1px solid #E1E1E6"></div><svg class="abs" style="left:390.00px;top:477.00px;" width="25.0" height="29.0" viewBox="0 0 25 29" fill="none"><g stroke="#fff" stroke-linecap="butt" fill="none"><path d="M9.6 12.6 L10.6 10.0 A2.9 2.9 0 1 1 15.2 8.4 L18.4 8.7" stroke-width="2.5" stroke-linejoin="round"/><path d="M5.7 18.8 A6.8 6.8 0 1 1 19.3 18.8" stroke-width="2.4"/><path d="M6.6 19.3 A5.95 5.95 0 0 0 18.4 19.3" stroke-width="1.9"/><path d="M5.9 24.9 H19.1" stroke-width="2.3"/></g></svg><div class="abs" style="left:369.80px;top:514.00px;width:65.20px;height:1.00px;background:#2A1D7C"></div><div class="abs" style="left:369.80px;top:644.00px;width:65.20px;height:1.00px;background:#2A1D7C"></div><div class="abs" style="left:373.20px;top:651.00px;width:58.80px;height:35.00px;background:#5539E3;border-radius:3px"></div><svg class="abs" style="left:395.50px;top:525.30px;" width="14" height="14" viewBox="0 0 24 24" fill="none"><path stroke="#fff" stroke-width="2.5" stroke-linecap="round" stroke-linejoin="round" fill="none" d="M3.5 5.5l1.5 1.5 2.5-2.5M3.5 11.5l1.5 1.5 2.5-2.5M3.5 17.5l1.5 1.5 2.5-2.5M11 6h9M11 12h9M11 18h9"/></svg><div class="t" style="left:202.60px;width:400px;text-align:center;top:542.99px;font-size:8.6px;-webkit-text-stroke:0.17px currentColor;color:#C3BDEC;">Tasks</div><svg class="abs" style="left:395.50px;top:566.80px;" width="14" height="14" viewBox="0 0 24 24" fill="none"><rect x="4" y="3" width="16" height="18" rx="2" stroke="#fff" stroke-width="2.5" stroke-linecap="round" stroke-linejoin="round" fill="none"/><path stroke="#fff" stroke-width="2.5" stroke-linecap="round" stroke-linejoin="round" fill="none" d="M8 7h8v3H8zM8 14v.01M12 14v.01M16 14v.01M8 17.5v.01M12 17.5v.01M16 17.5v.01"/></svg><div class="t" style="left:202.60px;width:400px;text-align:center;top:583.99px;font-size:8.6px;-webkit-text-stroke:0.17px currentColor;color:#C3BDEC;">Accounting</div><svg class="abs" style="left:395.50px;top:607.80px;" width="14" height="14" viewBox="0 0 24 24" fill="none"><path stroke="#fff" stroke-width="2.5" stroke-linecap="round" stroke-linejoin="round" fill="none" d="M7 10h3V7L6.5 3.5a6 6 0 018 8l6 6a2 2 0 01-3 3l-6-6a6 6 0 01-8-8L7 10"/></svg><div class="t" style="left:202.60px;width:400px;text-align:center;top:624.69px;font-size:8.6px;-webkit-text-stroke:0.17px currentColor;color:#C3BDEC;">Construction</div><svg class="abs" style="left:395.50px;top:655.00px;" width="14" height="14" viewBox="0 0 24 24" fill="none"><path stroke="#fff" stroke-width="2.5" stroke-linecap="round" stroke-linejoin="round" fill="none" d="M10.3 4.3c.4-1.8 2.9-1.8 3.4 0a1.7 1.7 0 002.6 1.1c1.5-.9 3.3.8 2.4 2.4a1.7 1.7 0 001 2.6c1.8.4 1.8 2.9 0 3.4a1.7 1.7 0 00-1 2.6c.9 1.5-.8 3.3-2.4 2.4a1.7 1.7 0 00-2.6 1c-.4 1.8-2.9 1.8-3.4 0a1.7 1.7 0 00-2.6-1c-1.5.9-3.3-.8-2.4-2.4a1.7 1.7 0 00-1-2.6c-1.8-.4-1.8-2.9 0-3.4a1.7 1.7 0 001-2.6c-.9-1.5.8-3.3 2.4-2.4 1 .6 2.3.1 2.6-1.1z"/><circle cx="12" cy="12" r="3" stroke="#fff" stroke-width="2.5" stroke-linecap="round" stroke-linejoin="round" fill="none"/></svg><div class="t" style="left:202.60px;width:400px;text-align:center;top:672.49px;font-size:8.6px;-webkit-text-stroke:0.17px currentColor;color:#fff;">Settings</div><svg class="abs" style="left:395.50px;top:696.00px;" width="14" height="14" viewBox="0 0 24 24" fill="none"><path stroke="#fff" stroke-width="2.5" stroke-linecap="round" stroke-linejoin="round" fill="none" d="M20 5v14a1.5 1.5 0 01-1.5 1.5h-11A1.5 1.5 0 016 19V5a1.5 1.5 0 011.5-1.5h11A1.5 1.5 0 0120 5zM3.5 8h3M3.5 16h3M10 8h6v8h-6z"/></svg><div class="t" style="left:202.60px;width:400px;text-align:center;top:713.49px;font-size:8.6px;-webkit-text-stroke:0.17px currentColor;color:#C3BDEC;">Support</div><div class="t" style="left:453.30px;top:489.21px;font-size:12.7px;-webkit-text-stroke:0.25px currentColor;color:#2e2c3a;">Settings &amp; Support</div><div class="abs" style="left:1308.00px;top:481.50px;width:26.00px;height:26.00px;background:#F4F3F8;border-radius:50%;box-shadow:0 0 3px 1px #F5F4F9"></div><svg class="abs" style="left:1313.80px;top:487.30px;" width="14" height="14" viewBox="0 0 14 14" fill="none"><circle cx="6" cy="6" r="4.4" stroke="#4C3E9C" stroke-width="1.9"/><path d="M9.3 9.3l3.4 3.4" stroke="#4C3E9C" stroke-width="1.9" stroke-linecap="round"/></svg><div class="abs" style="left:1345.20px;top:482.80px;width:71.40px;height:22.80px;background:#5039C6;border-radius:3px"></div><div class="t" style="left:1181.00px;width:400px;text-align:center;top:489.37px;font-size:10.5px;font-weight:bold;color:#fff;">New Task</div><div class="abs" style="left:1428.50px;top:481.50px;width:25.00px;height:25.00px;background:#EEF6F4;border-radius:50%;box-shadow:0 0 3px 1px #F1F7F5"></div><div class="t" style="left:1240.60px;width:400px;text-align:center;top:490.17px;font-size:9.6px;font-weight:bold;color:#3E9E80;">JC</div><div class="abs" style="left:1463.00px;top:481.50px;width:26.00px;height:26.00px;background:#F1F0F7;border-radius:50%;box-shadow:0 0 3px 1px #F3F2F8"></div><svg class="abs" style="left:1469.80px;top:487.00px;" width="12" height="13.5" viewBox="0 0 13 15" fill="none"><path d="M6.5 1.3c-2.3 0-4 1.8-4 4.2v3.7L1.2 11.5h10.6L10.5 9.2V5.5c0-2.4-1.7-4.2-4-4.2zM4.8 13.2c.4.7 1 1 1.7 1s1.3-.3 1.7-1" stroke="#4C3E9C" stroke-width="1.8" stroke-linejoin="round" fill="#FAFAFD"/></svg><div class="abs" style="left:1479.30px;top:477.10px;width:14.20px;height:14.20px;background:#F1565F;border-radius:50%"></div><div class="t" style="left:1286.40px;width:400px;text-align:center;top:481.55px;font-size:5.5px;color:#FFE8EA;">10</div><div class="t" style="left:501.50px;top:534.70px;font-size:11.1px;-webkit-text-stroke:0.22px currentColor;color:#7665CE;">Settings</div><div class="t" style="left:566.00px;top:534.73px;font-size:10.8px;-webkit-text-stroke:0.22px currentColor;color:#55535f;">Users &amp; Permissions</div><div class="abs" style="left:497.00px;top:549.50px;width:979.00px;height:1.00px;background:#EEEEF1"></div><div class="abs" style="left:498.40px;top:548.60px;width:47.00px;height:1.80px;background:#6A55C9;border-radius:1px"></div><svg class="abs" style="left:498.50px;top:578.50px;" width="11" height="11" viewBox="0 0 11 11" fill="none"><path d="M1 4L5.5 1 10 4zM1 10h9M2 4.5v4.5M4.3 4.5v4.5M6.7 4.5v4.5M9 4.5v4.5" stroke="#8f8d99" stroke-width="1.1" stroke-linejoin="round"/></svg><div class="t" style="left:514.80px;top:577.89px;font-size:12.85px;-webkit-text-stroke:0.58px currentColor;color:#23222e;">Bank Accounts</div><div class="abs" style="left:1335.30px;top:569.00px;width:141.30px;height:23.60px;background:#F1EEFD;border:1px solid #8E80D3;border-radius:3px"></div><div class="t" style="left:1205.80px;width:400px;text-align:center;top:575.90px;font-size:10.2px;font-weight:bold;color:#5644B4;">Link New Bank Account</div><div class="abs" style="left:497.70px;top:603.30px;width:484.30px;height:101.40px;background:#fff;border:1px solid #E5E5E7;border-radius:4px"></div><div class="t" style="left:510.00px;top:617.73px;font-size:10.8px;-webkit-text-stroke:0.22px currentColor;color:#23222e;">Bank United, NA</div><svg class="abs" style="left:955.30px;top:621.30px;" width="13" height="4" viewBox="0 0 13 4" fill="none"><circle cx="1.8" cy="2" r="1.05" fill="#4B40A0"/><circle cx="6.5" cy="2" r="1.05" fill="#4B40A0"/><circle cx="11.2" cy="2" r="1.05" fill="#4B40A0"/></svg><div class="abs" style="left:510.00px;top:639.30px;width:458.70px;height:1.50px;background:#E6E6E9"></div><div class="abs" style="left:510.00px;top:668.60px;width:458.70px;height:1.00px;background:#E4E4E8"></div><div class="t" style="left:521.60px;top:650.40px;font-size:9.4px;color:#6a6875;">Account Number</div><div class="t" style="left:521.60px;top:679.70px;font-size:9.4px;color:#6a6875;">Routing Number</div><div class="t" style="right:546.20px;top:651.21px;font-size:11px;-webkit-text-stroke:0.22px currentColor;color:#23222e;">123456789</div><div class="t" style="right:546.20px;top:679.51px;font-size:11px;-webkit-text-stroke:0.22px currentColor;color:#23222e;">123456789</div><div class="abs" style="left:992.70px;top:603.30px;width:484.30px;height:101.40px;background:#fff;border:1px solid #E5E5E7;border-radius:4px"></div><div class="t" style="left:1005.00px;top:617.73px;font-size:10.8px;-webkit-text-stroke:0.22px currentColor;color:#23222e;">Bank United, NA</div><svg class="abs" style="left:1450.30px;top:621.30px;" width="13" height="4" viewBox="0 0 13 4" fill="none"><circle cx="1.8" cy="2" r="1.05" fill="#4B40A0"/><circle cx="6.5" cy="2" r="1.05" fill="#4B40A0"/><circle cx="11.2" cy="2" r="1.05" fill="#4B40A0"/></svg><div class="abs" style="left:1005.00px;top:639.30px;width:458.70px;height:1.50px;background:#E6E6E9"></div><div class="abs" style="left:1005.00px;top:668.60px;width:458.70px;height:1.00px;background:#E4E4E8"></div><div class="t" style="left:1016.60px;top:650.40px;font-size:9.4px;color:#6a6875;">Account Number</div><div class="t" style="left:1016.60px;top:679.70px;font-size:9.4px;color:#6a6875;">Routing Number</div><div class="t" style="right:51.20px;top:651.21px;font-size:11px;-webkit-text-stroke:0.22px currentColor;color:#23222e;">123456789</div><div class="t" style="right:51.20px;top:679.51px;font-size:11px;-webkit-text-stroke:0.22px currentColor;color:#23222e;">123456789</div><svg class="abs" style="left:498.50px;top:738.00px;" width="11" height="12" viewBox="0 0 11 12" fill="none"><path d="M5.5 1L1.5 2.6v3.2c0 2.6 1.7 4.4 4 5.2 2.3-.8 4-2.6 4-5.2V2.6z" stroke="#6f6d7a" stroke-width="1.1" stroke-linejoin="round"/></svg><div class="t" style="left:514.60px;top:736.51px;font-size:12.65px;-webkit-text-stroke:0.57px currentColor;color:#23222e;">Insurance Policies</div><div class="abs" style="left:1347.60px;top:728.70px;width:128.90px;height:22.70px;background:#F1EEFD;border:1px solid #8E80D3;border-radius:3px"></div><div class="t" style="left:1212.00px;width:400px;text-align:center;top:735.39px;font-size:10.3px;font-weight:bold;color:#5644B4;">Add Insurance Policy</div><div class="abs" style="left:497.70px;top:763.30px;width:978.80px;height:136.70px;background:#fff;border:1px solid #E5E5E7;border-radius:4px"></div><div class="t" style="left:510.00px;top:776.73px;font-size:10.8px;-webkit-text-stroke:0.22px currentColor;color:#23222e;">Insurance Name</div><svg class="abs" style="left:1450.30px;top:781.40px;" width="13" height="4" viewBox="0 0 13 4" fill="none"><circle cx="1.8" cy="2" r="1.05" fill="#4B40A0"/><circle cx="6.5" cy="2" r="1.05" fill="#4B40A0"/><circle cx="11.2" cy="2" r="1.05" fill="#4B40A0"/></svg><div class="abs" style="left:509.40px;top:799.00px;width:474.40px;height:1.00px;background:#E4E4E8"></div><div class="abs" style="left:992.20px;top:799.00px;width:472.10px;height:1.00px;background:#E4E4E8"></div><div class="abs" style="left:509.40px;top:829.00px;width:474.40px;height:1.00px;background:#E4E4E8"></div><div class="abs" style="left:992.20px;top:829.00px;width:472.10px;height:1.00px;background:#E4E4E8"></div><div class="abs" style="left:509.40px;top:858.60px;width:474.40px;height:1.00px;background:#E4E4E8"></div><div class="abs" style="left:992.20px;top:858.60px;width:472.10px;height:1.00px;background:#E4E4E8"></div><div class="t" style="left:521.50px;top:810.40px;font-size:9.4px;color:#6a6875;">Carrier</div><div class="t" style="left:521.50px;top:839.90px;font-size:9.4px;color:#6a6875;">Policy Number</div><div class="t" style="right:533.00px;top:811.23px;font-size:10.8px;-webkit-text-stroke:0.22px currentColor;color:#23222e;">State Farm</div><div class="t" style="right:533.00px;top:839.48px;font-size:11.2px;-webkit-text-stroke:0.22px currentColor;color:#23222e;">123456789</div><div class="t" style="left:1003.90px;top:810.40px;font-size:9.4px;color:#6a6875;">Coverage Amount</div><div class="t" style="left:1003.90px;top:840.30px;font-size:9.4px;color:#6a6875;">Effective Date</div><div class="t" style="right:51.20px;top:810.18px;font-size:11.2px;-webkit-text-stroke:0.22px currentColor;color:#23222e;">$20,000</div><div class="t" style="right:51.20px;top:839.48px;font-size:11.2px;-webkit-text-stroke:0.22px currentColor;color:#23222e;">06/01/2023</div></body></html>
